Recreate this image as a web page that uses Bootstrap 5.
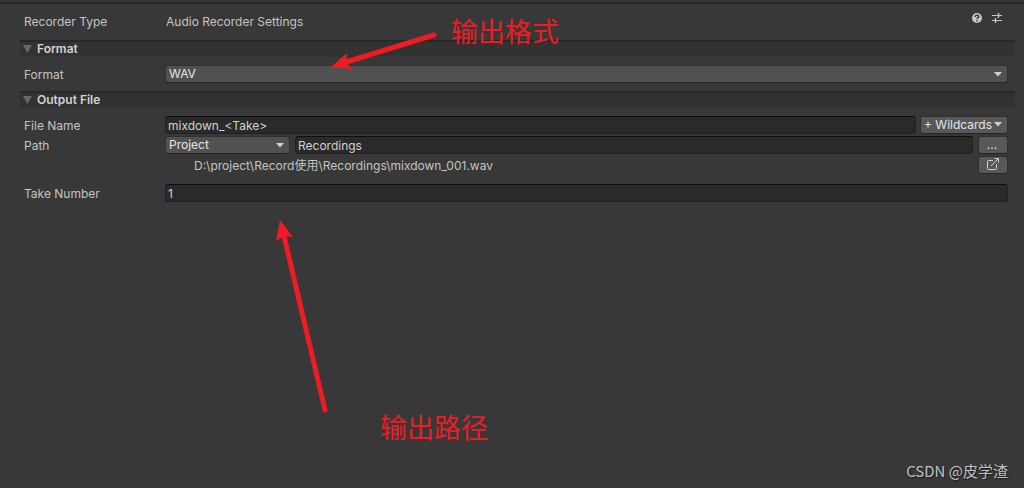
<!DOCTYPE html>
<html lang="zh-CN">
<head>
<meta charset="utf-8">
<meta name="viewport" content="width=device-width, initial-scale=1">
<title>Audio Recorder Settings</title>
<link href="https://cdn.jsdelivr.net/npm/bootstrap@5.3.0/dist/css/bootstrap.min.css" rel="stylesheet">
<style>
  body { background: #383838; color: #c4c4c4; font: 12px/18px Inter, "Noto Sans CJK SC", sans-serif; }
  .window-edge { height: 4px; border-bottom: 2px solid #282828; }
  .recorder { padding: 0 9px 0 20px; }
  .type-row { padding: 9px 12px 9px 4px; }
  .section-head { height: 17px; padding-left: 3px; border-top: 2px solid #282828; background: #323232; font-size: 12px; line-height: 13px; font-weight: 600; color: #d2d2d2; gap: 5px; margin: 0; padding-bottom: 2px; }
  .section-body { padding: 8px 7px 8px 4px; }
  .stack { gap: 2px; }
  .field-label { flex: 0 0 141px; line-height: 18px; padding-top: 1px; }
  .type-row .field-label { flex-basis: 142px; padding-top: 0; }
  .field-row { height: 18px; }
  .editor-input, .editor-select, .editor-btn { height: 18px; min-height: 0; font-size: 12px; line-height: 16px; border-radius: 3px; color: #d2d2d2; box-shadow: none; }
  .editor-input, .editor-input:focus { background: #2a2a2a; border: 1px solid #212121; border-top-color: #0d0d0d; color: #d2d2d2; padding: 1px 2px 0; }
  .editor-select { background-color: #515151; border: 1px solid #303030; border-bottom-color: #242424; padding: 0 18px 1px 3px; line-height: 15px; color: #e4e4e4;
    background-image: url("data:image/svg+xml,%3Csvg xmlns='http://www.w3.org/2000/svg' viewBox='0 0 8 5'%3E%3Cpath d='M0 0h8L4 4.6z' fill='%23d0d0d0'/%3E%3C/svg%3E"); background-size: 8px 5px; background-position: right 5px center; }
  .editor-btn, .editor-btn:hover { background: #585858; border: 1px solid #303030; border-bottom-color: #242424; color: #e4e4e4; padding: 0 5px 1px 3px; line-height: 15px; }
  .root-select { flex: 0 0 125px; width: 125px; }
  .folder-input { margin: 0 5px; }
  .wild-btn { flex: 0 0 88px; }
  .small-btn { flex: 0 0 30px; }
  .icon-btn { background: none; border: 0; padding: 0; line-height: 0; }
  .full-path { padding-left: 170px; padding-top: 1px; }
  .arrow { left: 0; top: 0; pointer-events: none; }
  .note { color: #ed1c24; font: 27px/36px "Noto Sans CJK SC", sans-serif; white-space: nowrap; }
  .note-format { left: 451px; top: 13px; }
  .note-path { left: 380px; top: 409px; }
  .watermark { right: 16px; bottom: 6px; font: 15px/22px "Noto Sans CJK SC", sans-serif; color: #c0c0c0; text-shadow: 1px 1px 1px #1c1c1c; }
</style>
</head>
<body class="position-relative min-vh-100">
<div class="window-edge"></div>
<main class="recorder">
  <div class="type-row d-flex">
    <span class="field-label">Recorder Type</span>
    <span class="flex-grow-1">Audio Recorder Settings</span>
    <div class="d-flex align-items-start gap-2">
      <button type="button" class="icon-btn" aria-label="Help">
        <svg width="12" height="11" viewBox="0 0 12 11"><circle cx="6" cy="5" r="5" fill="#c8c8c8"/><path d="M4.200 3.900C4.200 1.500 7.800 1.600 7.800 3.800C7.800 4.900 6 4.900 6 6M6 7v1.400" fill="none" stroke="#383838" stroke-width="1.500"/></svg>
      </button>
      <button type="button" class="icon-btn" aria-label="Presets">
        <svg width="12" height="11" viewBox="0 0 12 11"><path d="M1 2.500h6M8 2.500h3M1 7.500h3M5 7.500h6" fill="none" stroke="#c8c8c8"/><path d="M7.500 0v5M4.500 5v5" fill="none" stroke="#c8c8c8" stroke-width="1.400"/></svg>
      </button>
    </div>
  </div>

  <section>
    <h2 class="section-head d-flex align-items-center">
      <svg width="9" height="8" viewBox="0 0 9 8"><path d="M0 0h9L4.500 8z" fill="#686868"/></svg>Format
    </h2>
    <div class="section-body">
      <div class="field-row d-flex">
        <label class="field-label" for="format">Format</label>
        <select id="format" class="form-select editor-select"><option>WAV</option></select>
      </div>
    </div>
  </section>

  <section>
    <h2 class="section-head d-flex align-items-center">
      <svg width="9" height="8" viewBox="0 0 9 8"><path d="M0 0h9L4.500 8z" fill="#686868"/></svg>Output File
    </h2>
    <div class="section-body stack d-flex flex-column">
      <div class="field-row d-flex">
        <label class="field-label" for="file-name">File Name</label>
        <input id="file-name" class="form-control editor-input me-1" value="mixdown_&lt;Take&gt;">
        <button type="button" class="btn editor-btn wild-btn d-flex align-items-center justify-content-between text-nowrap">+ Wildcards
          <svg width="8" height="5" viewBox="0 0 8 5"><path d="M0 0h8L4 4.600z" fill="#d0d0d0"/></svg>
        </button>
      </div>
      <div class="field-row d-flex">
        <label class="field-label" for="path-root">Path</label>
        <select id="path-root" class="form-select editor-select root-select"><option>Project</option></select>
        <input class="form-control editor-input folder-input" aria-label="Folder" value="Recordings">
        <button type="button" class="btn editor-btn small-btn" aria-label="Browse">...</button>
      </div>
      <div class="field-row d-flex justify-content-between">
        <span class="full-path">D:\project\Record使用\Recordings\mixdown_001.wav</span>
        <button type="button" class="btn editor-btn small-btn d-flex align-items-center justify-content-center" aria-label="Open folder">
          <svg width="13" height="13" viewBox="0 0 13 13"><path d="M7 2.500H2.500Q1.500 2.500 1.500 3.500V10.500Q1.500 11.500 2.500 11.500H9.500Q10.500 11.500 10.500 10.500V6M5 8L12 1M8.500 .500H12.500V4.500" fill="none" stroke="#d0d0d0"/></svg>
        </button>
      </div>
      <div class="field-row d-flex mt-2">
        <label class="field-label" for="take">Take Number</label>
        <input id="take" class="form-control editor-input" value="1">
      </div>
    </div>
  </section>
</main>

<svg class="arrow position-absolute" width="450" height="420" viewBox="0 0 450 420" aria-hidden="true">
  <g fill="#ed1c24" stroke="#ed1c24" stroke-linecap="round">
    <path d="M434 35L346 62M325 410L284 236" stroke-width="5"/>
    <path d="M331 67L347 53L346 62L352 69ZM280 220L293 237L284 236L276 241Z" stroke="none"/>
  </g>
</svg>
<div class="note note-format position-absolute">输出格式</div>
<div class="note note-path position-absolute">输出路径</div>
<div class="watermark position-absolute">CSDN @皮学渣</div>
<script src="https://cdn.jsdelivr.net/npm/bootstrap@5.3.0/dist/js/bootstrap.bundle.min.js"></script>
</body>
</html>
